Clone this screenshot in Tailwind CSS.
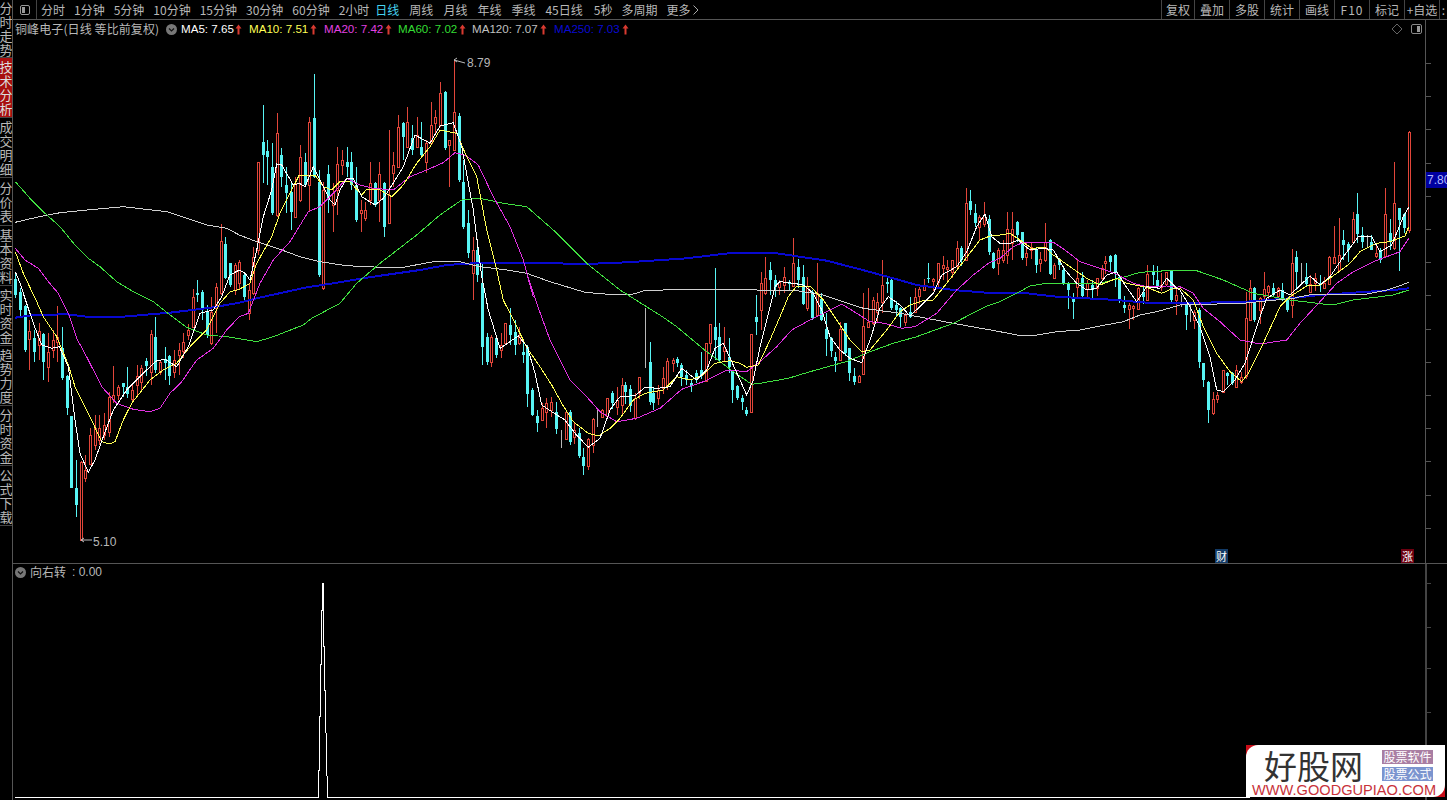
<!DOCTYPE html>
<html lang="zh">
<head>
<meta charset="UTF-8">
<title>铜峰电子 日线</title>
<script src="https://cdn.jsdelivr.net/npm/@tailwindcss/browser@4"></script>
</head>
<body class="bg-black overflow-hidden font-['Liberation_Sans','Noto_Sans_CJK_SC',sans-serif]">
<div class="relative w-[1447px] h-[800px] flex overflow-hidden text-[#b8b8b8]">

  <!-- left tabs -->
  <div class="w-[13px] shrink-0 border-r border-[#555] flex flex-col text-[13px] leading-[14px] text-center font-['Noto_Sans_CJK_SC',sans-serif] overflow-hidden">
    <div class="h-[58px] shrink-0 border-b border-[#444] flex items-center justify-center overflow-hidden"><span class="w-[13px]">分时走势</span></div>
    <div class="h-[60px] shrink-0 bg-[#a80f0f] border-b border-[#444] flex items-center justify-center overflow-hidden text-[#ddd]"><span class="w-[13px]">技术分析</span></div>
    <div class="h-[60px] shrink-0 border-b border-[#444] flex items-center justify-center overflow-hidden"><span class="w-[13px]">成交明细</span></div>
    <div class="h-[48px] shrink-0 border-b border-[#444] flex items-center justify-center overflow-hidden"><span class="w-[13px]">分价表</span></div>
    <div class="h-[60px] shrink-0 border-b border-[#444] flex items-center justify-center overflow-hidden"><span class="w-[13px]">基本资料</span></div>
    <div class="h-[60px] shrink-0 border-b border-[#444] flex items-center justify-center overflow-hidden"><span class="w-[13px]">实时资金</span></div>
    <div class="h-[60px] shrink-0 border-b border-[#444] flex items-center justify-center overflow-hidden"><span class="w-[13px]">趋势力度</span></div>
    <div class="h-[60px] shrink-0 border-b border-[#444] flex items-center justify-center overflow-hidden"><span class="w-[13px]">分时资金</span></div>
    <div class="h-[60px] shrink-0 border-b border-[#444] flex items-center justify-center overflow-hidden"><span class="w-[13px]">公式下载</span></div>
  </div>

  <div class="flex-1 flex flex-col min-w-0">
    <!-- top toolbar -->
    <div class="h-[20px] shrink-0 flex items-center border-b border-[#555] text-[12px] leading-[19px] font-['Noto_Sans_CJK_SC',sans-serif]">
      <div class="w-[24px] h-full border-r border-[#444] flex items-center justify-center">
        <svg width="12" height="12" viewBox="0 0 12 12"><rect x="1.5" y="1.5" width="9" height="9" rx="1.5" fill="none" stroke="#999"/><rect x="3" y="3" width="3" height="6" fill="#999"/></svg>
      </div>
      <div class="flex gap-[9px] ml-[4px] items-center">
        <span>分时</span><span>1分钟</span><span>5分钟</span><span>10分钟</span><span>15分钟</span><span>30分钟</span><span>60分钟</span><span>2小时</span>
        <span class="-ml-[3px] text-[#45d4f2]">日线</span><span class="ml-[1px]">周线</span><span class="ml-[1px]">月线</span><span class="ml-[1px]">年线</span><span class="ml-[1px]">季线</span><span class="ml-[1px]">45日线</span><span class="ml-[2px]">5秒</span><span>多周期</span><span>更多</span>
      </div>
      <svg class="ml-[2px]" width="8" height="12" viewBox="0 0 8 12"><path d="M1.5 1.5 L6 6 L1.5 10.5" fill="none" stroke="#aaa"/></svg>
      <div class="ml-auto flex h-full text-center">
        <span class="w-[33px] border-l border-[#444]">复权</span>
        <span class="w-[35px] border-l border-[#444]">叠加</span>
        <span class="w-[35px] border-l border-[#444]">多股</span>
        <span class="w-[35px] border-l border-[#444]">统计</span>
        <span class="w-[35px] border-l border-[#444]">画线</span>
        <span class="w-[35px] border-l border-[#444] tracking-[1px]">F10</span>
        <span class="w-[35px] border-l border-[#444]">标记</span>
        <span class="w-[35px] border-l border-[#444]">+自选</span>
        <span class="w-[8px] border-l border-[#444] overflow-hidden">:</span>
      </div>
    </div>

    <!-- price panel -->
    <div class="relative h-[544px] shrink-0 border-b border-[#555]">
      <svg id="price" class="absolute inset-0" width="1434" height="543" viewBox="13 20 1434 543"></svg>
      <div class="absolute left-[2px] top-[1px] flex items-center text-[11.6px] leading-[16px] whitespace-nowrap">
        <span class="font-['Noto_Sans_CJK_SC',sans-serif] text-[12px] tracking-[0.1px] w-[151px]">铜峰电子(日线 等比前复权)</span>
        <svg class="mr-[4px]" width="11" height="11" viewBox="0 0 11 11"><circle cx="5.5" cy="5.5" r="5.5" fill="#777"/><path d="M3 4.5 L5.5 7 L8 4.5" fill="none" stroke="#111" stroke-width="1.2"/></svg>
        <span class="w-[53px] text-white">MA5: 7.65</span><svg class="mr-[6px]" width="9" height="11" viewBox="0 0 9 11"><path d="M4.5 0.5 L7.5 4.5 L5.5 4.5 L5.5 10.5 L3.5 10.5 L3.5 4.5 L1.5 4.5 Z" fill="#d93a30"/></svg>
        <span class="w-[60px] text-[#ffff55]">MA10: 7.51</span><svg class="mr-[6px]" width="9" height="11" viewBox="0 0 9 11"><path d="M4.5 0.5 L7.5 4.5 L5.5 4.5 L5.5 10.5 L3.5 10.5 L3.5 4.5 L1.5 4.5 Z" fill="#d93a30"/></svg>
        <span class="w-[60px] text-[#e040e0]">MA20: 7.42</span><svg class="mr-[5px]" width="9" height="11" viewBox="0 0 9 11"><path d="M4.5 0.5 L7.5 4.5 L5.5 4.5 L5.5 10.5 L3.5 10.5 L3.5 4.5 L1.5 4.5 Z" fill="#d93a30"/></svg>
        <span class="w-[60px] text-[#33dd33]">MA60: 7.02</span><svg class="mr-[5px]" width="9" height="11" viewBox="0 0 9 11"><path d="M4.5 0.5 L7.5 4.5 L5.5 4.5 L5.5 10.5 L3.5 10.5 L3.5 4.5 L1.5 4.5 Z" fill="#d93a30"/></svg>
        <span class="w-[67px] text-[#c0c0c0]">MA120: 7.07</span><svg class="mr-[6px]" width="9" height="11" viewBox="0 0 9 11"><path d="M4.5 0.5 L7.5 4.5 L5.5 4.5 L5.5 10.5 L3.5 10.5 L3.5 4.5 L1.5 4.5 Z" fill="#d93a30"/></svg>
        <span class="w-[67px] text-[#0a0ad0]">MA250: 7.03</span><svg width="9" height="11" viewBox="0 0 9 11"><path d="M4.5 0.5 L7.5 4.5 L5.5 4.5 L5.5 10.5 L3.5 10.5 L3.5 4.5 L1.5 4.5 Z" fill="#d93a30"/></svg>
      </div>
      <div class="absolute right-[24px] top-[3px] flex items-center gap-[7px]">
        <svg width="12" height="12" viewBox="0 0 12 12"><path d="M6 1 L11 6 L6 11 L1 6 Z" fill="none" stroke="#666"/></svg>
        <svg width="13" height="12" viewBox="0 0 13 12"><rect x="1.5" y="1.5" width="10" height="9" rx="1.5" fill="none" stroke="#888"/><rect x="7" y="3" width="3" height="6" fill="#999"/></svg>
      </div>
      <div class="absolute right-0 top-[152px] w-[21px] h-[16px] bg-[#0000a0] text-[#b0b8ff] text-[12px] leading-[16px] overflow-hidden whitespace-nowrap pl-[1px]">7.80</div>
      <div class="absolute left-[1202px] top-[529px] w-[13px] h-[14px] bg-[#123a66] text-white text-[11px] leading-[14px] text-center font-['Noto_Sans_CJK_SC',sans-serif]">财</div>
      <div class="absolute left-[1388px] top-[529px] w-[13px] h-[14px] bg-[#6d0010] text-white text-[11px] leading-[14px] text-center font-['Noto_Sans_CJK_SC',sans-serif]">涨</div>
    </div>

    <!-- indicator panel -->
    <div class="relative flex-1">
      <svg id="indicator" class="absolute inset-0" width="1434" height="236" viewBox="13 564 1434 236"></svg>
      <div class="absolute left-[2px] top-0 flex items-center text-[12px] leading-[16px]">
        <svg class="mr-[4px]" width="11" height="11" viewBox="0 0 11 11"><circle cx="5.5" cy="5.5" r="5.5" fill="#777"/><path d="M3 4.5 L5.5 7 L8 4.5" fill="none" stroke="#111" stroke-width="1.2"/></svg>
        <span class="font-['Noto_Sans_CJK_SC',sans-serif]">向右转</span><span class="ml-[6px]">: 0.00</span>
      </div>
    </div>
  </div>

  <!-- watermark -->
  <div class="absolute left-[1246px] top-[745px] w-[199px] h-[52px] bg-[#c80d18]">
    <div class="relative w-full h-full bg-white rounded-tl-[12px] rounded-br-[12px] font-['Noto_Sans_CJK_SC',sans-serif]">
      <div class="absolute left-[18px] top-[3px] h-[34px] text-[33px] leading-[34px] text-[#333] whitespace-nowrap">好股网</div>
      <div class="absolute left-[136px] top-[5px] w-[51px] h-[14px] bg-[#a97ea3] text-white text-[12px] leading-[14px] text-center whitespace-nowrap">股票软件</div>
      <div class="absolute left-[136px] top-[22px] w-[51px] h-[14px] bg-[#7b94cf] text-white text-[12px] leading-[14px] text-center whitespace-nowrap">股票公式</div>
      <div class="absolute left-[6px] top-[38px] text-[14.6px] leading-[14px] text-[#c8323a] whitespace-nowrap font-['Liberation_Sans',sans-serif]">WWW.GOODGUPIAO.COM</div>
    </div>
  </div>
</div>

<script>
const NS = 'http://www.w3.org/2000/svg';
const price = document.getElementById('price');
const indicator = document.getElementById('indicator');

function el(svg, tag, attrs, text) {
  const n = document.createElementNS(NS, tag);
  for (const k in attrs) n.setAttribute(k, attrs[k]);
  if (text) n.textContent = text;
  svg.appendChild(n);
  return n;
}

const RED = '#e2463a', CYAN = '#58f4f4', PALE = '#b8b8b8';

function candle(cx, type, h, t, b, l) {
  const x = Math.round(cx);
  const col = type === 'r' ? RED : type === 'p' ? PALE : CYAN;
  el(price, 'rect', { x: x, y: Math.round(h), width: 1, height: Math.max(1, Math.round(l - h)), fill: col, 'shape-rendering': 'crispEdges' });
  if (type === 'r') {
    el(price, 'rect', { x: x - 0.5, y: Math.round(t) + 0.5, width: 2, height: Math.max(1, Math.round(b - t)), fill: '#000', stroke: col, 'shape-rendering': 'crispEdges' });
  } else if (type === 'c') {
    el(price, 'rect', { x: x - 1, y: Math.round(t), width: 3, height: Math.max(1, Math.round(b - t)), fill: col, 'shape-rendering': 'crispEdges' });
  }
}

// left part, sequential candles, real y values
const seq = `c 272 279 295 298|c 288 292 310 316|c 305 306 350 352|r 320 331 339 370|c 330 338 352 362|r 323 331 345 360|c 333 334 362 380|r 333 352 367 382|r 330 340 350 358|r 306 337 342 362|c 327 348 378 380|c 375 376 408 415|c 416 416 488 488|c 460 488 505 517|r 461 462 540 540|r 455 470 478 482|r 428 435 464 465|r 415 428 445 450|r 415 428 440 445|r 413 425 435 440|r 392 397 432 437|r 366 395 399 403|r 385 387 395 400|c 383 383 387 397|c 367 387 394 398|r 383 390 399 402|r 365 376 385 395|r 365 368 382 390|c 358 361 366 376|r 330 334 372 385|c 317 337 370 373|r 360 362 372 375|c 347 359 363 380|c 355 356 376 385|r 350 360 372 378|r 343 350 355 375|r 333 342 351 358|r 324 330 335 340|r 289 297 327 328|c 280 293 295 302|c 290 292 310 320|c 305 312 335 338|r 297 312 343 345|r 283 287 308 333|r 224 241 293 295|c 237 244 278 279|c 263 263 285 287|r 263 265 290 295|r 260 262 283 290|c 272 275 297 302|r 283 290 313 320|r 247 257 293 295|r 162 162 250 255|c 105 142 155 183|c 140 151 157 185|c 143 167 213 215|r 113 133 215 217|c 148 155 177 187|c 167 185 193 213|c 183 192 212 230|r 177 183 217 218|r 145 157 200 202|c 153 162 185 187|r 117 122 185 212|c 74 118 177 178|c 170 182 275 277|r 182 190 288 290|c 165 174 200 213|r 183 193 205 232|r 147 164 190 215|r 150 160 165 175|c 147 162 167 177|c 152 162 185 190|c 167 185 220 222|r 200 210 213 232|r 202 210 218 221|r 162 183 200 205|c 182 183 205 207|r 162 174 200 222|c 182 183 227 237|r 130 195 223 224|r 152 165 173 187|r 115 127 167 168|c 122 123 137 160|r 107 122 147 148|c 125 138 150 155|r 117 135 147 148|c 122 147 155 157|r 140 143 162 173|r 102 125 143 145|r 110 117 123 133|r 82 93 125 127|c 91 92 148 150|r 140 140 145 187|r 60 112 150 150|c 113 116 180 182|c 160 182 227 229|c 210 223 253 258|r 237 250 273 300|c 247 250 275 282|c 263 283 347 365|c 333 337 362 365|r 335 337 362 367|c 337 338 355 358|r 333 345 350 358|r 323 323 343 345|c 308 325 335 345|c 320 332 345 355|r 327 337 343 345`;
seq.split('|').forEach((s, i) => {
  const p = s.split(' ');
  candle(15.33 + 4.667 * i, p[0], +p[1], +p[2], +p[3], +p[4]);
});

// the rest of the candles, measured as x type high top bottom low on 3x crops
function crop(x0, y0, data) {
  data.trim().split('|').forEach(s => {
    const p = s.trim().split(' ');
    candle(x0 + p[0] / 3, p[1], y0 + p[2] / 3, y0 + p[3] / 3, y0 + p[4] / 3, y0 + p[5] / 3);
  });
}

crop(520, 230, `10 c 340 365 375 400|22 c 345 350 490 530|37 c 475 480 555 560|52 c 540 558 580 605|65 r 520 535 570 570|79 r 505 520 548 595|93 r 500 515 540 560|107 c 515 545 595 610|122 p 600 600 655 655|137 r 545 545 625 630|149 c 540 545 635 645|163 r 575 600 620 640|178 c 595 610 680 685|190 c 655 682 710 735|205 r 625 628 710 722|220 r 565 568 645 670|232 p 540 540 590 590|247 r 538 540 560 565|262 r 505 505 560 565|275 c 482 490 520 535|290 r 470 510 530 555|305 r 445 465 525 555|316 c 455 465 485 520|331 c 465 478 530 545|346 r 490 505 565 570|358 r 440 442 490 505|374 p 235 235 415 415|389 c 337 395 515 525|400 c 470 490 520 540|415 r 465 480 505 525|430 r 410 445 475 490|442 r 385 393 465 480|458 r 383 390 400 425|472 c 380 388 400 410|484 c 400 405 440 470|499 c 420 435 450 465|514 c 450 460 470 485|528 c 420 430 445 460|542 c 365 420 435 445|557 r 340 340 455 458|569 r 283 283 340 370|584 c 115 290 330 390|598 c 280 320 390 395|611 r 292 350 362 395|626 c 325 380 410 430|637 c 420 420 480 518|652 c 465 468 505 510|667 c 495 503 515 540|679 c 530 540 553 558|694 r 312 312 545 545|709 c 195 260 275 315|722 r 125 160 240 300`);

crop(760, 180, `16 r 230 295 340 345|31 c 245 270 300 345|44 c 285 300 320 350|58 r 300 305 320 345|73 r 262 290 315 340|86 c 300 305 312 330|100 r 175 248 318 320|115 c 238 262 300 325|128 c 255 290 372 375|142 r 292 318 385 395|157 c 330 335 412 420|170 r 250 338 405 410|184 c 340 358 420 425|198 c 400 448 478 530|212 c 470 475 515 530|226 c 515 530 542 575|241 r 425 448 540 540|254 c 430 430 520 530|268 c 505 505 580 605|283 c 565 588 605 615|296 r 585 588 605 610|310 r 340 438 582 585|325 r 325 425 440 445|338 r 350 360 430 435|352 r 338 365 395 425|367 r 240 315 365 400|380 c 295 305 310 340|394 c 298 300 385 390|409 c 362 375 390 410|421 c 380 385 412 440|436 r 400 405 425 440|450 c 352 395 410 415|464 r 325 350 395 400|478 r 320 328 350 370|492 r 298 315 330 335|505 c 250 295 298 310|520 r 295 298 305 335|534 r 248 248 305 325|548 r 228 255 265 300|562 r 240 262 268 310|577 r 240 240 275 295|590 r 182 205 260 262|604 c 198 205 240 258|617 r 25 68 240 242|631 c 30 62 90 105|645 c 72 100 130 140|658 r 105 110 140 180|673 r 65 105 132 140|688 c 105 118 218 225|700 c 215 218 262 265|715 r 205 210 250 285|729 r 180 210 240 250`);

crop(1000, 200, `22 r 35 88 165 190|37 r 35 88 130 180|52 c 62 65 105 125|65 c 95 97 175 178|79 r 130 158 170 200|94 r 125 140 150 175|107 c 145 150 195 220|121 r 155 178 190 215|136 r 68 125 180 185|149 c 118 120 222 225|163 r 190 195 235 238|178 c 175 178 195 212|190 c 205 210 250 255|205 c 245 250 272 325|220 c 278 290 305 355|232 r 180 235 262 290|247 c 215 235 290 292|262 r 240 250 268 290|275 c 240 255 270 298|290 r 235 235 265 288|305 r 195 205 235 240|316 r 168 182 188 222|331 c 165 167 185 215|346 c 162 165 220 260|358 c 228 232 302 310|373 c 288 315 325 340|388 r 308 315 328 385|400 r 315 318 325 360|415 r 262 265 328 330|430 c 260 275 290 310|442 r 195 222 300 302|458 c 195 215 225 255|472 c 197 240 258 265|484 r 220 255 262 275|499 r 215 215 250 252|514 c 210 212 300 305|527 r 265 285 300 345|542 p 285 290 320 320|557 c 308 310 347 388|569 p 310 315 368 368|583 r 330 335 358 388`);

crop(1180, 120, `56 c 565 570 725 745|70 c 728 730 782 800|85 c 783 785 870 910|98 r 815 838 880 885|112 r 815 825 838 848|128 r 750 750 815 815|140 c 755 760 768 795|155 c 755 760 790 795|169 r 735 750 800 802|183 r 755 770 785 790|197 r 515 595 770 775|211 r 480 505 600 602|223 c 500 505 600 605|239 r 530 535 572 610|253 r 455 508 530 535|265 r 495 497 515 540|280 c 490 505 525 530|295 r 500 505 530 535|307 c 490 510 540 545|322 c 530 535 570 575|337 r 388 430 555 595|349 c 393 410 455 510|364 p 428 430 480 490|379 c 430 470 490 500|390 r 465 492 515 518|406 r 460 475 490 515|421 c 465 490 497 515|433 r 470 488 502 505|448 r 408 410 490 492|463 r 318 410 428 430|476 r 295 405 450 455|490 c 330 360 375 420|505 c 365 373 392 425|518 r 275 298 368 370|532 c 220 282 342 370|547 c 322 345 365 385|560 p 345 350 385 385|574 c 345 365 388 390|589 r 368 398 408 412|601 c 385 390 420 430|616 r 205 283 408 412|631 c 298 340 365 390|643 r 125 250 385 390|658 c 265 265 300 455|673 c 280 282 325 340|686 r 33 35 330 340`);

// moving averages, traced from the same crops
function trace(parts) {
  return parts.map(([x0, y0, str]) => str.trim().split(/\s+/).map(pt => {
    const [a, b] = pt.split(',');
    return (x0 + a / 3).toFixed(1) + ',' + (y0 + b / 3).toFixed(1);
  }).join(' ')).join(' ');
}

const series = [
  ['#0808d0', 2, [
    [0, 120, '46,593 100,585 200,583 260,590 370,590 450,583 510,578 640,562 718,548'],
    [240, 50, '50,745 200,712 280,700 400,680 540,660 620,645 700,640 840,640'],
    [520, 230, '100,100 200,102 320,97 500,85 640,68 710,70'],
    [760, 180, '50,220 200,242 300,268 400,295 470,315 580,330 700,340'],
    [1000, 200, '80,280 170,290 350,300 440,308 530,310'],
    [1180, 120, '200,545 330,535 420,525 520,518 640,510 686,505']]],
  ['#d0d0d0', 1, [
    [0, 120, '46,307 110,292 180,278 260,270 370,260 500,275 620,315 680,325 718,345'],
    [240, 50, '50,575 120,598 180,620 240,635 320,647 420,652 490,652 580,635 660,635 720,650 800,660 860,670'],
    [520, 230, '90,155 195,187 290,195 340,192 370,183 470,178 660,178 710,180'],
    [760, 180, '100,330 190,345 310,385 420,400 580,430 720,455'],
    [1000, 200, '50,405 110,405 170,395 240,390 300,378 370,365 420,345 470,335 530,318'],
    [1180, 120, '0,555 190,550 340,535 400,522 560,522 620,510 660,497 686,487']]],
  ['#40e040', 1, [
    [0, 120, '46,185 90,235 135,280 180,320 225,375 265,415 300,440 350,485 400,515 460,545 510,585 560,622 620,645 680,650 718,656'],
    [240, 50, '50,875 100,860 190,825 215,805 300,760 350,700 420,640 530,555 600,495 665,450 720,445 790,460 860,470'],
    [520, 230, '100,0 200,100 300,180 430,262 470,290 560,365 640,425 695,463 720,460'],
    [760, 180, '85,595 150,575 265,543 330,515 400,490 470,470 580,430 680,378 720,365'],
    [1000, 200, '50,280 90,258 140,250 180,250 300,250 370,232 420,217 500,212 530,212'],
    [1180, 120, '50,452 130,480 220,520 330,540 430,552 470,552 520,540 600,530 640,525 686,510']]],
  ['#e030e0', 1, [
    [0, 120, '46,385 75,420 115,445 145,485 175,520 205,580 230,655 265,720 305,800 350,850 400,868 450,875 480,865 510,820 545,785 590,720 640,685 680,630 718,590'],
    [240, 50, '25,790 60,700 100,630 150,575 205,485 240,470 280,430 320,385 360,405 400,415 460,420 510,380 560,360 610,338 645,308 680,318 715,345 760,440 810,530 850,630 880,740'],
    [520, 230, '20,130 50,220 90,330 150,450 200,500 240,545 290,575 350,565 420,535 485,478 550,455 620,420 680,425 720,395'],
    [760, 180, '50,500 95,450 150,420 200,395 245,372 290,400 330,425 375,430 425,445 465,440 530,400 590,330 640,285 685,250 720,235'],
    [1000, 200, '40,140 70,127 160,127 195,150 240,185 300,205 345,220 400,250 440,260 500,258 530,262'],
    [1180, 120, '0,500 40,520 70,565 120,605 180,660 240,672 320,660 360,610 420,545 470,490 520,455 580,425 660,395 686,355']]],
  ['#ffff55', 1, [
    [0, 120, '46,395 70,460 110,545 130,590 170,650 205,735 225,800 265,880 305,965 330,972 345,965 370,900 395,850 450,780 490,750 530,730 570,680 620,630 660,550 690,515 718,508'],
    [240, 50, '30,700 50,640 95,560 120,490 150,430 178,375 205,375 225,375 250,410 275,420 300,395 330,395 365,435 380,418 420,420 455,440 490,405 530,340 570,290 600,240 650,250 680,320 710,380 740,540 770,660 790,750 830,830'],
    [520, 230, '22,355 60,410 95,465 125,520 160,575 205,610 235,618 270,595 300,565 340,510 375,490 430,480 470,440 510,450 550,435 585,400 630,392 660,400 680,412 715,405'],
    [760, 180, '30,480 60,410 85,350 110,318 150,318 190,360 230,420 270,480 305,515 330,510 380,450 420,395 450,375 490,362 520,360 560,310 610,245 660,180 690,168 720,165'],
    [1000, 200, '30,100 60,120 95,145 135,142 160,165 210,200 260,235 300,255 350,235 380,250 440,262 485,280 520,265'],
    [1180, 120, '0,505 40,540 70,620 110,700 150,755 185,785 205,760 250,670 300,560 330,530 385,495 420,495 470,460 510,430 540,395 590,370 630,365 675,348 686,320']]],
  ['#ffffff', 1, [
    [0, 120, '46,455 60,490 85,565 100,610 125,675 155,685 178,680 205,740 225,900 240,1000 265,1057 285,1020 310,950 340,870 380,810 440,750 470,722 495,718 530,740 565,680 600,580 640,570 665,530 690,465 718,450'],
    [240, 50, '15,670 30,690 50,600 70,500 95,420 110,342 125,345 160,405 178,400 195,410 220,350 245,400 270,450 285,465 300,420 320,385 340,385 365,440 405,465 430,445 450,415 490,350 525,255 570,280 600,228 640,218 665,290 700,480 725,680 745,780 780,895 835,858'],
    [520, 230, '22,350 45,430 65,525 100,548 135,570 165,610 205,652 240,625 270,540 300,500 345,497 375,472 415,475 450,470 485,415 530,450 560,420 585,355 610,340 635,395 660,450 680,495 700,450 720,350'],
    [760, 180, '20,420 45,320 60,305 100,310 130,315 160,340 185,390 210,470 240,510 270,535 305,548 330,480 360,385 385,350 420,375 450,408 490,370 520,340 545,285 590,260 620,215 650,140 675,102 695,170 720,190'],
    [1000, 200, '30,130 55,120 90,150 130,145 160,150 195,210 230,250 260,270 290,265 320,225 350,215 375,255 410,305 440,260 480,265 500,235 530,265'],
    [1180, 120, '0,510 30,560 60,620 90,710 110,810 130,815 165,780 195,730 240,590 260,535 300,510 330,525 390,468 420,495 450,470 490,410 535,350 575,350 600,395 635,375 670,290 686,262']]]
];
series.forEach(([col, w, parts]) => {
  el(price, 'polyline', { points: trace(parts), fill: 'none', stroke: col, 'stroke-width': w, 'shape-rendering': 'crispEdges' });
});

// extreme price labels
el(price, 'path', { d: 'M454 60 L465 63 M454 60 L457 58 M454 60 L457 62', fill: 'none', stroke: '#bbb' });
el(price, 'text', { x: 467, y: 67, fill: '#b8b8b8', 'font-size': 12, 'font-family': 'Liberation Sans' }, '8.79');
el(price, 'path', { d: 'M81 540 L92 540 M81 540 L84 538 M81 540 L84 542', fill: 'none', stroke: '#bbb' });
el(price, 'text', { x: 93, y: 546, fill: '#b8b8b8', 'font-size': 12, 'font-family': 'Liberation Sans' }, '5.10');

// right axis
el(price, 'rect', { x: 1425, y: 20, width: 1, height: 543, fill: '#555', 'shape-rendering': 'crispEdges' });
for (let y = 63; y < 560; y += 33.2) {
  el(price, 'rect', { x: 1426, y: Math.round(y), width: 5, height: 1, fill: '#555', 'shape-rendering': 'crispEdges' });
}
el(indicator, 'rect', { x: 1425, y: 564, width: 2, height: 236, fill: '#444', 'shape-rendering': 'crispEdges' });
[583, 627, 668, 712, 755].forEach(y => {
  el(indicator, 'rect', { x: 1427, y: y, width: 4, height: 1, fill: '#444', 'shape-rendering': 'crispEdges' });
});

// indicator spike
const spike = '955,802 955,722 959,722 959,560 962,560 962,402 965,402 965,240 967,240 967,160 969,160 969,240 971,240 971,350 973,350 975,480 977,480 978,610 981,738 983,802'
  .split(' ').map(pt => { const [a, b] = pt.split(','); return (a / 3).toFixed(1) + ',' + (530 + b / 3).toFixed(1); }).join(' ');
el(indicator, 'polyline', { points: '15,797 ' + spike + ' 1250,797', fill: 'none', stroke: '#fff', 'stroke-width': 1, 'shape-rendering': 'crispEdges' });
</script>
</body>
</html>
